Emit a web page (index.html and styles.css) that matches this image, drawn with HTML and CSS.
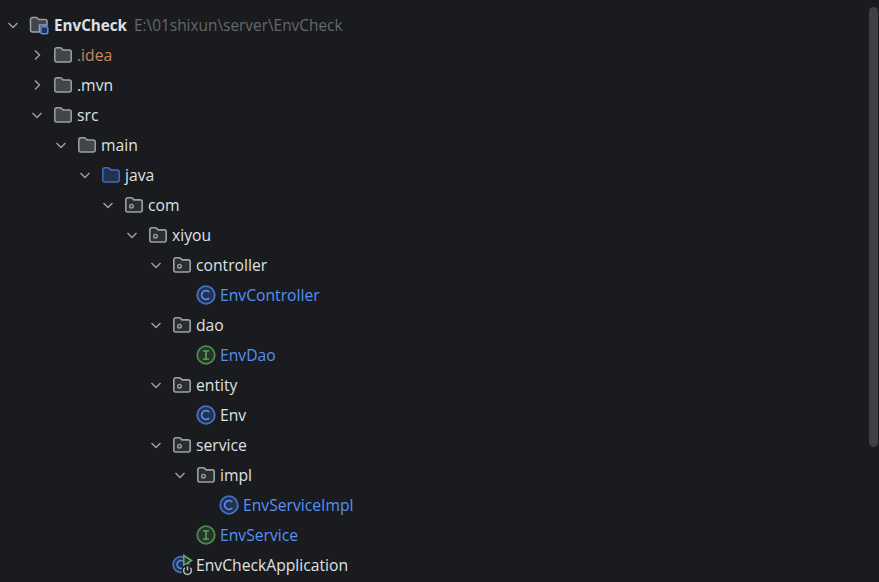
FILE: index.html
```html
<!DOCTYPE html>
<html lang="en">
<head>
    <meta charset="UTF-8">
    <meta name="viewport" content="width=device-width, initial-scale=1.0">
    <title>EnvCheck</title>
    <link rel="stylesheet" href="styles.css">
</head>
<body>
    <svg class="defs" width="0" height="0">
        <symbol id="open" viewBox="0 0 16 16"><path d="M3.500 6l4.500 4.500 4.500-4.500"/></symbol>
        <symbol id="closed" viewBox="0 0 16 16"><path d="M6 3.500l4.500 4.500-4.500 4.500"/></symbol>
        <symbol id="folder" viewBox="0 0 20 20"><path class="folder" d="M1.800 4.800a2 2 0 0 1 2-2h3.400a2 2 0 0 1 1.400.6l1.500 1.500h6.100a2 2 0 0 1 2 2v8.100a2 2 0 0 1-2 2H3.800a2 2 0 0 1-2-2z"/></symbol>
        <symbol id="source" viewBox="0 0 20 20"><path class="source" d="M1.800 4.800a2 2 0 0 1 2-2h3.400a2 2 0 0 1 1.400.6l1.500 1.500h6.100a2 2 0 0 1 2 2v8.100a2 2 0 0 1-2 2H3.800a2 2 0 0 1-2-2z"/></symbol>
        <symbol id="package" viewBox="0 0 20 20"><path class="package" d="M1.800 4.800a2 2 0 0 1 2-2h3.400a2 2 0 0 1 1.400.6l1.500 1.500h6.100a2 2 0 0 1 2 2v8.100a2 2 0 0 1-2 2H3.800a2 2 0 0 1-2-2z"/><circle class="package-dot" cx="7.500" cy="11.200" r="1.800"/></symbol>
        <symbol id="project" viewBox="0 0 20 20"><path class="folder" d="M10.500 17H3.500a2 2 0 0 1-2-2V4.500a2 2 0 0 1 2-2h3.400a2 2 0 0 1 1.400.6l1.500 1.500h6.200a2 2 0 0 1 2 2v3.400H10.500z"/><rect class="badge" x="11.800" y="11.800" width="7" height="7" rx="1.500"/></symbol>
        <symbol id="class" viewBox="0 0 18 18"><circle class="class" cx="9" cy="9" r="7.900"/><path class="class-mark" d="M12 6.300a4 4 0 1 0 0 5.400"/></symbol>
        <symbol id="iface" viewBox="0 0 18 18"><circle class="iface" cx="9" cy="9" r="7.900"/><path class="iface-mark" d="M6.300 5.300h5.400M6.300 12.700h5.400M9 5.300v7.400"/></symbol>
        <symbol id="app" viewBox="0 0 24 24"><circle class="class" cx="11" cy="11.500" r="7.900"/><path class="class-mark" d="M14 8.800a4 4 0 1 0 0 5.400"/><path class="run" d="M13.800 2.500l7.700 5-7.700 5z"/><circle class="boot-bg" cx="17.500" cy="17.500" r="6"/><path class="boot" d="M14.800 14.700a3.900 3.900 0 1 0 5.400 0M17.500 13.300v4.200"/></symbol>
    </svg>

    <div class="tree">
        <div class="row d0">
            <svg class="arrow"><use href="#open"/></svg>
            <svg class="icon"><use href="#project"/></svg>
            <span class="name strong">EnvCheck</span>
            <span class="path">E:\01shixun\server\EnvCheck</span>
        </div>
        <div class="row d1">
            <svg class="arrow"><use href="#closed"/></svg>
            <svg class="icon"><use href="#folder"/></svg>
            <span class="name ignored">.idea</span>
        </div>
        <div class="row d1">
            <svg class="arrow"><use href="#closed"/></svg>
            <svg class="icon"><use href="#folder"/></svg>
            <span class="name">.mvn</span>
        </div>
        <div class="row d1">
            <svg class="arrow"><use href="#open"/></svg>
            <svg class="icon"><use href="#folder"/></svg>
            <span class="name">src</span>
        </div>
        <div class="row d2">
            <svg class="arrow"><use href="#open"/></svg>
            <svg class="icon"><use href="#folder"/></svg>
            <span class="name">main</span>
        </div>
        <div class="row d3">
            <svg class="arrow"><use href="#open"/></svg>
            <svg class="icon"><use href="#source"/></svg>
            <span class="name">java</span>
        </div>
        <div class="row d4">
            <svg class="arrow"><use href="#open"/></svg>
            <svg class="icon"><use href="#package"/></svg>
            <span class="name">com</span>
        </div>
        <div class="row d5">
            <svg class="arrow"><use href="#open"/></svg>
            <svg class="icon"><use href="#package"/></svg>
            <span class="name">xiyou</span>
        </div>
        <div class="row d6">
            <svg class="arrow"><use href="#open"/></svg>
            <svg class="icon"><use href="#package"/></svg>
            <span class="name">controller</span>
        </div>
        <div class="row d7">
            <span class="arrow"></span>
            <svg class="icon"><use href="#class"/></svg>
            <span class="name modified">EnvController</span>
        </div>
        <div class="row d6">
            <svg class="arrow"><use href="#open"/></svg>
            <svg class="icon"><use href="#package"/></svg>
            <span class="name">dao</span>
        </div>
        <div class="row d7">
            <span class="arrow"></span>
            <svg class="icon"><use href="#iface"/></svg>
            <span class="name modified">EnvDao</span>
        </div>
        <div class="row d6">
            <svg class="arrow"><use href="#open"/></svg>
            <svg class="icon"><use href="#package"/></svg>
            <span class="name">entity</span>
        </div>
        <div class="row d7">
            <span class="arrow"></span>
            <svg class="icon"><use href="#class"/></svg>
            <span class="name">Env</span>
        </div>
        <div class="row d6">
            <svg class="arrow"><use href="#open"/></svg>
            <svg class="icon"><use href="#package"/></svg>
            <span class="name">service</span>
        </div>
        <div class="row d7">
            <svg class="arrow"><use href="#open"/></svg>
            <svg class="icon"><use href="#package"/></svg>
            <span class="name">impl</span>
        </div>
        <div class="row d8">
            <span class="arrow"></span>
            <svg class="icon"><use href="#class"/></svg>
            <span class="name modified">EnvServiceImpl</span>
        </div>
        <div class="row d7">
            <span class="arrow"></span>
            <svg class="icon"><use href="#iface"/></svg>
            <span class="name modified">EnvService</span>
        </div>
        <div class="row d6">
            <span class="arrow"></span>
            <svg class="icon app"><use href="#app"/></svg>
            <span class="name">EnvCheckApplication</span>
        </div>
    </div>

    <div class="scrollbar"></div>
</body>
</html>
```
FILE: styles.css
```css
html, body {
    height: 100%;
}
body {
    margin: 0;
    background-color: #1a1b1e;
    color: #dfe1e5;
    font-family: "Open Sans", "Noto Sans", sans-serif;
    font-size: 15.7px;
    overflow: hidden;
    display: flex;
    justify-content: space-between;
    align-items: flex-start;
}
.defs {
    position: absolute;
}
.tree {
    padding-top: 10px;
}
.row {
    display: flex;
    align-items: center;
    height: 30px;
    white-space: nowrap;
}

/* tree indent */
.d0 { padding-left: 5px; }
.d1 { padding-left: 29px; }
.d2 { padding-left: 53px; }
.d3 { padding-left: 77px; }
.d4 { padding-left: 100px; }
.d5 { padding-left: 124px; }
.d6 { padding-left: 148px; }
.d7 { padding-left: 172px; }
.d8 { padding-left: 195px; }

.arrow {
    width: 16px;
    height: 16px;
    flex-shrink: 0;
    fill: none;
    stroke: #9da0a8;
    stroke-width: 1.4;
}
.icon {
    width: 20px;
    height: 20px;
    flex-shrink: 0;
    margin-left: 8px;
    margin-right: 4px;
}
.icon.app {
    width: 24px;
    height: 24px;
    margin-left: 6px;
    margin-right: 2px;
}
.name {
    line-height: 30px;
}
.strong {
    margin-left: 1px;
    font-size: 15.2px;
    font-weight: 700;
}
.path {
    margin-left: 7px;
    font-size: 15.4px;
    color: #64676d;
}
.ignored {
    color: #c5885f;
}
.modified {
    color: #5690f5;
}

/* file icons */
.folder {
    fill: #43454a;
    stroke: #9da0a8;
    stroke-width: 1.5;
}
.source {
    fill: #25324d;
    stroke: #3e6bc0;
    stroke-width: 1.5;
}
.package {
    fill: #2b2d30;
    stroke: #9da0a8;
    stroke-width: 1.6;
}
.package-dot {
    fill: none;
    stroke: #9da0a8;
    stroke-width: 1.4;
}
.badge {
    fill: #25324d;
    stroke: #548af7;
    stroke-width: 1.5;
}
.class {
    fill: #25324d;
    stroke: #4470c8;
    stroke-width: 1.600;
}
.class-mark {
    fill: none;
    stroke: #548af7;
    stroke-width: 1.500;
}
.iface {
    fill: #253627;
    stroke: #4f8a50;
    stroke-width: 1.600;
}
.iface-mark {
    fill: none;
    stroke: #5fad65;
    stroke-width: 1.300;
}
.run {
    fill: #253627;
    stroke: #5fad65;
    stroke-width: 1.500;
}
.boot-bg {
    fill: #1a1b1e;
}
.boot {
    fill: none;
    stroke: #b5b7bd;
    stroke-width: 1.500;
}

.scrollbar {
    width: 9px;
    height: 440px;
    margin-top: 7px;
    margin-right: 1px;
    border-radius: 5px;
    background-color: #3f4041;
    flex-shrink: 0;
}
```
